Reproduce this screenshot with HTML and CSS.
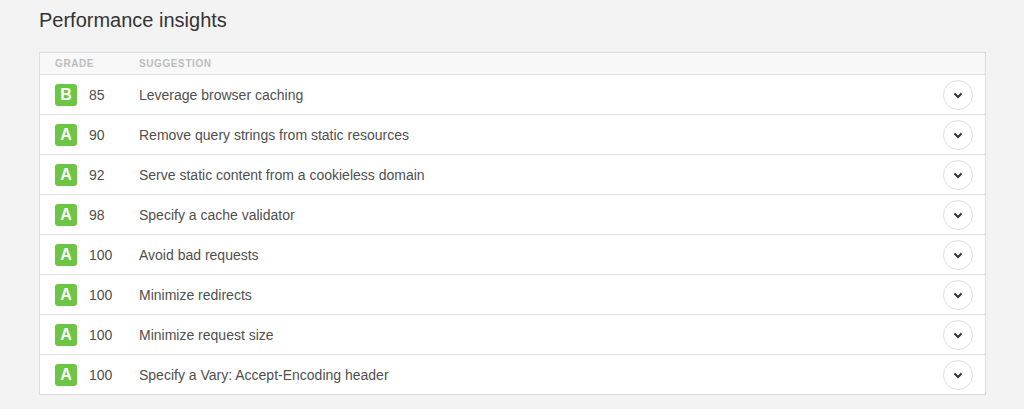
FILE: index.html
```html
<!DOCTYPE html>
<html lang="en">
<head>
    <meta charset="UTF-8">
    <title>Performance insights</title>
    <link rel="stylesheet" href="styles.css">
</head>
<body>
    <main class="page">
        <h2 class="title">Performance insights</h2>
        <div class="insights">
            <div class="row head">
                <span class="col-grade">Grade</span>
                <span class="col-text">Suggestion</span>
            </div>
            <div class="row">
                <span class="badge">B</span><span class="score">85</span>
                <span class="col-text">Leverage browser caching</span>
                <button class="toggle"><svg width="10" height="7" viewBox="0 0 10 7"><path d="M1.5 1.5 L5 5 L8.5 1.5" /></svg></button>
            </div>
            <div class="row">
                <span class="badge">A</span><span class="score">90</span>
                <span class="col-text">Remove query strings from static resources</span>
                <button class="toggle"><svg width="10" height="7" viewBox="0 0 10 7"><path d="M1.5 1.5 L5 5 L8.5 1.5" /></svg></button>
            </div>
            <div class="row">
                <span class="badge">A</span><span class="score">92</span>
                <span class="col-text">Serve static content from a cookieless domain</span>
                <button class="toggle"><svg width="10" height="7" viewBox="0 0 10 7"><path d="M1.5 1.5 L5 5 L8.5 1.5" /></svg></button>
            </div>
            <div class="row">
                <span class="badge">A</span><span class="score">98</span>
                <span class="col-text">Specify a cache validator</span>
                <button class="toggle"><svg width="10" height="7" viewBox="0 0 10 7"><path d="M1.5 1.5 L5 5 L8.5 1.5" /></svg></button>
            </div>
            <div class="row">
                <span class="badge">A</span><span class="score">100</span>
                <span class="col-text">Avoid bad requests</span>
                <button class="toggle"><svg width="10" height="7" viewBox="0 0 10 7"><path d="M1.5 1.5 L5 5 L8.5 1.5" /></svg></button>
            </div>
            <div class="row">
                <span class="badge">A</span><span class="score">100</span>
                <span class="col-text">Minimize redirects</span>
                <button class="toggle"><svg width="10" height="7" viewBox="0 0 10 7"><path d="M1.5 1.5 L5 5 L8.5 1.5" /></svg></button>
            </div>
            <div class="row">
                <span class="badge">A</span><span class="score">100</span>
                <span class="col-text">Minimize request size</span>
                <button class="toggle"><svg width="10" height="7" viewBox="0 0 10 7"><path d="M1.5 1.5 L5 5 L8.5 1.5" /></svg></button>
            </div>
            <div class="row">
                <span class="badge">A</span><span class="score">100</span>
                <span class="col-text">Specify a Vary: Accept-Encoding header</span>
                <button class="toggle"><svg width="10" height="7" viewBox="0 0 10 7"><path d="M1.5 1.5 L5 5 L8.5 1.5" /></svg></button>
            </div>
        </div>
    </main>
</body>
</html>
```

FILE: styles.css
```css
body {
    margin: 0;
    background-color: #f3f3f3;
    font-family: "Liberation Sans", Arial, sans-serif;
    color: #4f4f4f;
}

.page {
    padding: 8px 38px 0 39px;
}

.title {
    margin: 0 0 20px;
    font-size: 20px;
    font-weight: normal;
    line-height: 24px;
    color: #333;
}

.insights {
    width: 945px;
    border: 1px solid #dcdcdc;
    background-color: #fff;
}

.row {
    display: flex;
    align-items: center;
    height: 39px;
    padding: 0 12px 0 15px;
    border-top: 1px solid #e2e2e2;
    font-size: 14px;
}

.row.head {
    height: 21px;
    border-top: none;
    background-color: #f8f8f8;
    font-size: 10px;
    font-weight: bold;
    text-transform: uppercase;
    letter-spacing: 0.6px;
    color: #bdbdbd;
}

.col-grade {
    width: 84px;
}

.col-text {
    flex: 1;
}

.badge {
    width: 22px;
    height: 22px;
    border-radius: 3px;
    background-color: #6cc644;
    color: #fff;
    font-size: 16px;
    font-weight: bold;
    line-height: 22px;
    text-align: center;
}

.score {
    width: 50px;
    margin-left: 12px;
}

.toggle {
    display: flex;
    align-items: center;
    justify-content: center;
    width: 30px;
    height: 30px;
    padding: 0;
    border: 1px solid #dedede;
    border-radius: 50%;
    background-color: #fff;
    cursor: pointer;
}

.toggle svg {
    margin-top: 1px;
}

.toggle path {
    fill: none;
    stroke: #333;
    stroke-width: 2;
}
```
